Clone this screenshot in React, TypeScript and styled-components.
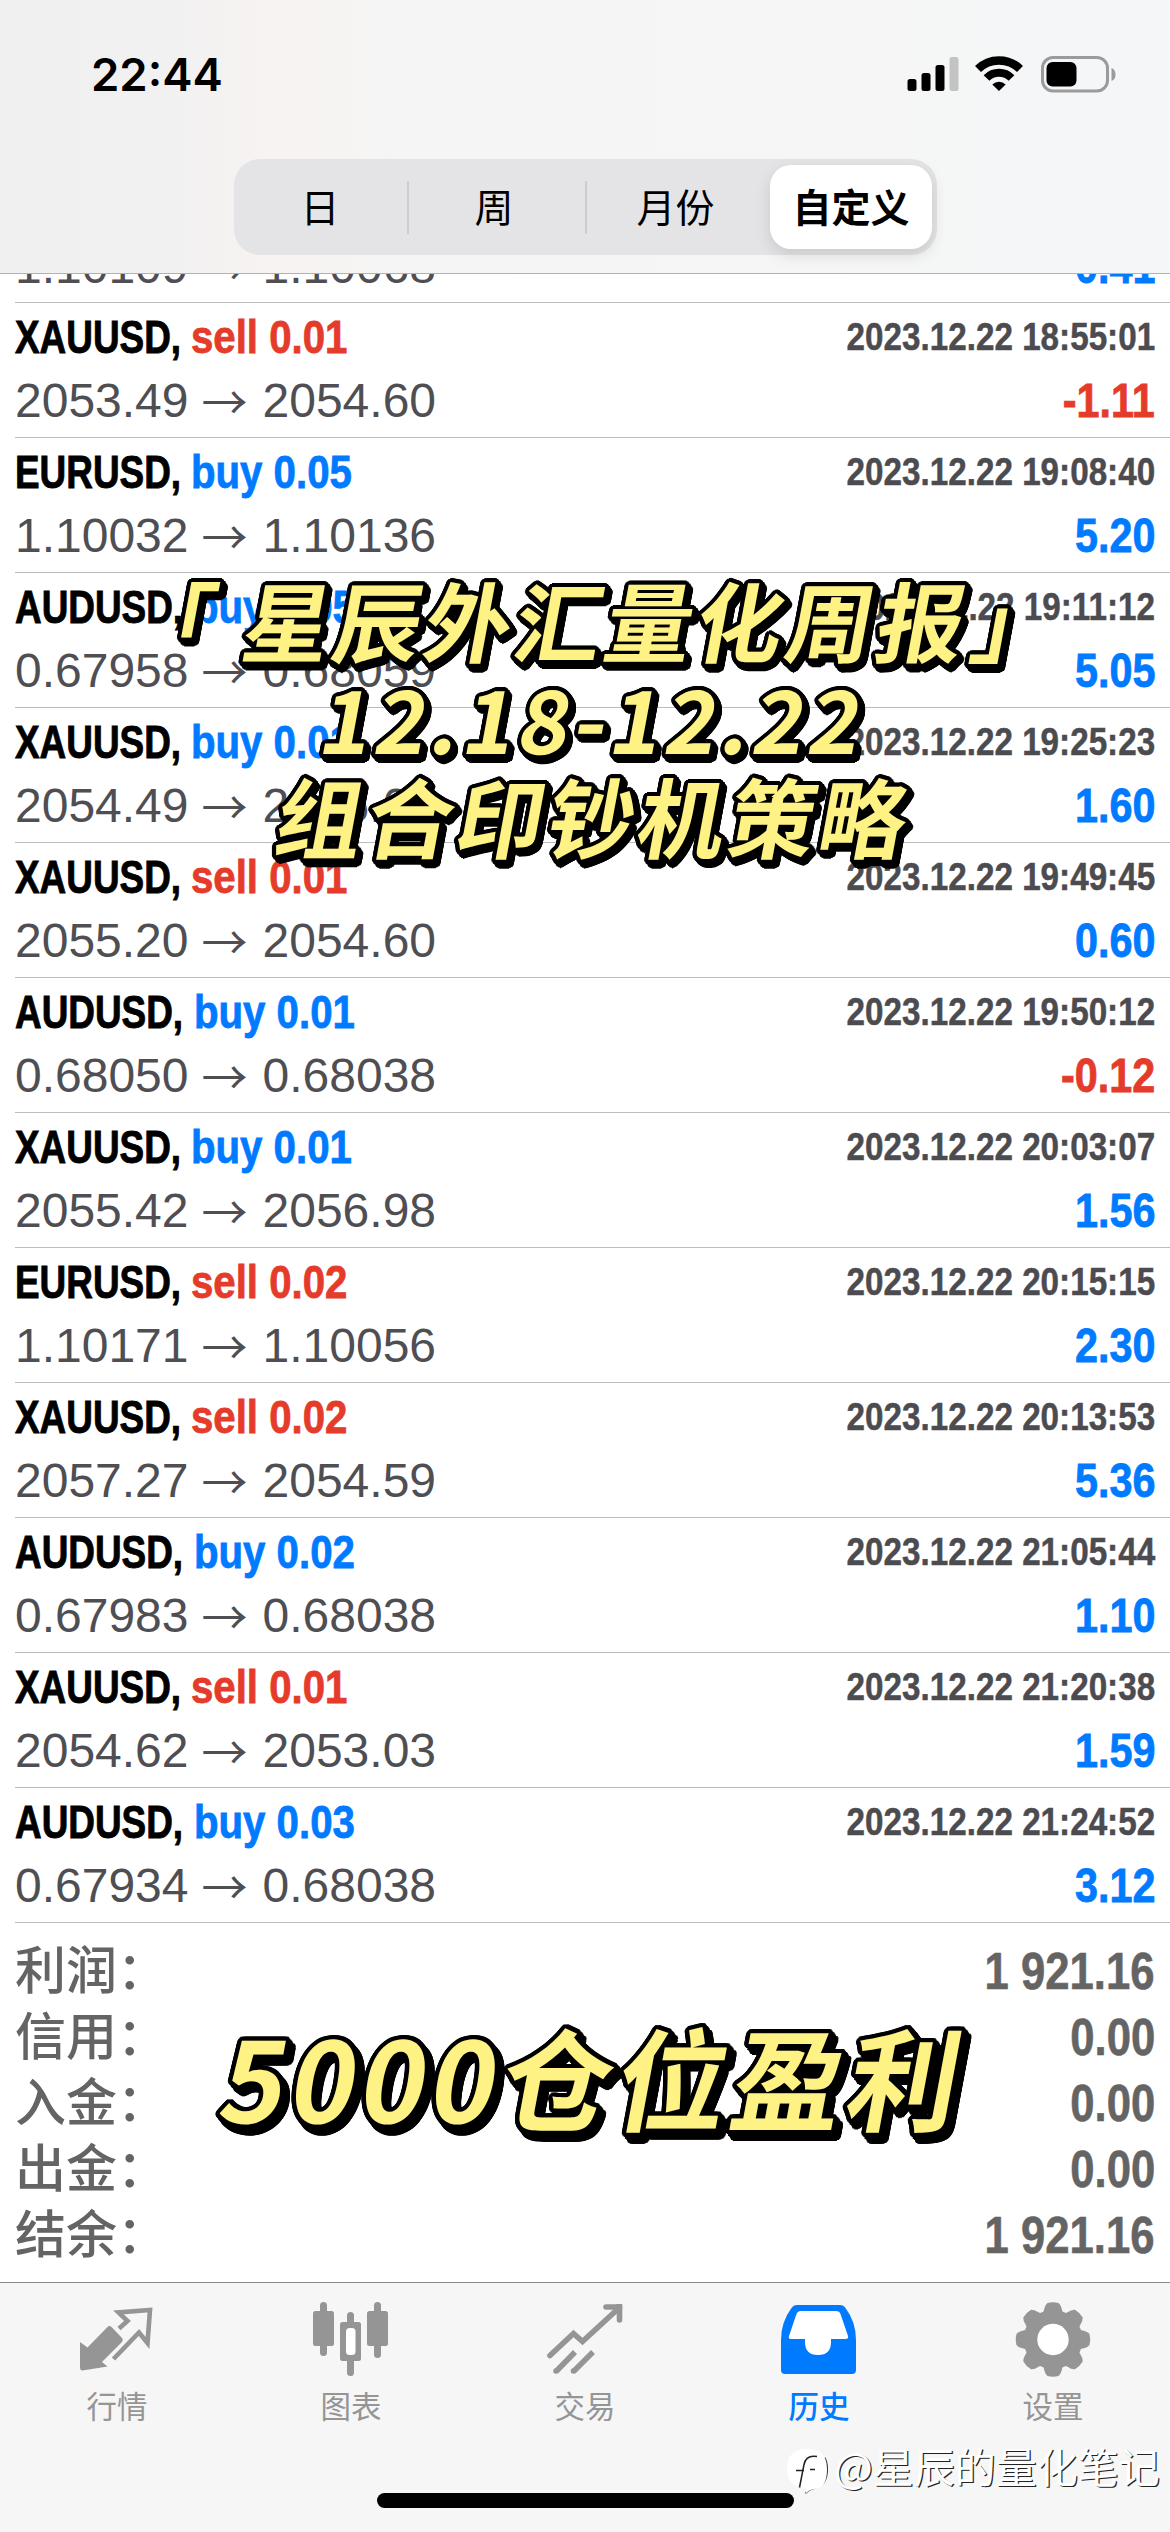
import React from "react";
import styled, { createGlobalStyle } from "styled-components";

const latin = `"Liberation Sans", Arial, "Noto Sans CJK SC", sans-serif`;
const cjk = `"Noto Sans CJK SC", "Liberation Sans", sans-serif`;
const blue = "#007aff";
const red = "#e53b2a";

const Global = createGlobalStyle`
  *{box-sizing:border-box}
  html,body{margin:0;padding:0;background:#fff}
`;

const Screen = styled.main`
  position: relative;
  width: 1170px;
  height: 2532px;
  overflow: hidden;
  display: flex;
  flex-direction: column;
  background: #fff;
  font-family: ${latin};
  font-kerning: none;
`;

const Header = styled.header`
  height: 274px;
  flex: none;
  border-bottom: 1px solid #b2b2b4;
  background: linear-gradient(90deg, #f0f0f0 0, #f2f1f1 170px, #f7f3f2 285px, #f5f5f5 420px, #f6f6f6 900px, #f4f6f9 1170px);
`;
const StatusBar = styled.div`
  height: 159px;
  padding: 52px 54px 0 91px;
  display: flex;
  justify-content: space-between;
`;
const Clock = styled.time`
  font: 600 45.5px/45px Inter, sans-serif;
  letter-spacing: 0;
  color: #000;
`;
const Segments = styled.nav`
  width: 703px;
  height: 96px;
  margin-left: 234px;
  padding: 6px 5px;
  border-radius: 26px;
  background: #e4e4e6;
  display: flex;
  align-items: center;
`;
const Segment = styled.button<{ $selected?: boolean; $w: number }>`
  width: ${(p) => p.$w}px;
  flex: none;
  height: 84px;
  border: 0;
  padding: ${(p) => (p.$selected ? "0 0 5px" : "0 6px 5px 0")};
  border-radius: 21px;
  background: ${(p) => (p.$selected ? "#fff" : "transparent")};
  box-shadow: ${(p) => (p.$selected ? "0 6px 16px rgba(0,0,0,.12)" : "none")};
  font: ${(p) => (p.$selected ? 700 : 400)} 39px/76px ${cjk};
  color: #000;
`;
const Divider = styled.span`
  width: 2px;
  height: 53px;
  background: #cdcdd0;
`;

const List = styled.section`
  height: 1649px;
  flex: none;
  overflow: hidden;
  display: flex;
  flex-direction: column;
  justify-content: flex-end;
`;
const Row = styled.article`
  height: 135px;
  flex: none;
  margin-left: 15px;
  padding: 7px 15px 0 0;
  border-bottom: 1px solid #bbbcbe;
`;
const ClippedRow = styled.article`
  height: 73px;
  flex: none;
  margin-left: 15px;
  padding-right: 15px;
  border-bottom: 1px solid #bbbcbe;
`;
const Line = styled.div<{ $h: number }>`
  height: ${(p) => p.$h}px;
  display: flex;
  justify-content: space-between;
  align-items: center;
`;
const Group = styled.div`
  display: flex;
  align-items: center;
`;
const SymbolName = styled.span<{ $w: number }>`
  width: ${(p) => p.$w}px;
  font: bold 47px/54px ${latin};
  white-space: nowrap;
  color: #000;
  -webkit-text-stroke: 0.9px #000;
  transform: scaleX(0.785);
  transform-origin: left;
`;
const Deal = styled.span<{ $color: string }>`
  font: bold 47px/54px ${latin};
  white-space: pre;
  color: ${(p) => p.$color};
  -webkit-text-stroke: 0.8px ${(p) => p.$color};
  transform: scaleX(0.855);
  transform-origin: left;
`;
const Stamp = styled.time`
  font: bold 39px/54px ${latin};
  white-space: nowrap;
  color: #4b4b50;
  -webkit-text-stroke: 0.5px #4b4b50;
  transform: scaleX(0.852);
  transform-origin: right;
`;
const Price = styled.span`
  font: 48px/54px ${latin};
  color: #4e4e53;
`;
const Arrow = styled.span`
  width: 74px;
  padding: 0 2px 5px 0;
  text-align: center;
  font: 400 46px/54px ${cjk};
  color: #4e4e53;
`;
const Profit = styled.span<{ $color: string }>`
  font: bold 47.5px/54px ${latin};
  color: ${(p) => p.$color};
  -webkit-text-stroke: 0.8px ${(p) => p.$color};
  transform: scaleX(0.87);
  transform-origin: right;
`;

const Summary = styled.section`
  height: 359px;
  flex: none;
  padding: 14px 15px 0;
  display: flex;
  flex-direction: column;
`;
const SummaryRow = styled.div`
  height: 66px;
  display: flex;
  justify-content: space-between;
  align-items: center;
  color: #646464;
`;
const SummaryLabel = styled.span`
  padding-bottom: 6px;
  font: 500 51px/60px ${cjk};
`;
const SummaryValue = styled.span`
  padding-top: 4px;
  font: bold 51px/62px ${latin};
  -webkit-text-stroke: 0.6px #646464;
  transform: scaleX(0.856);
  transform-origin: right;
`;

const TabBar = styled.nav`
  height: 250px;
  flex: none;
  border-top: 1px solid #8a8a8d;
  background: #f6f6f6;
  display: flex;
  align-items: flex-start;
`;
const Tab = styled.a<{ $active?: boolean }>`
  flex: 1;
  display: flex;
  flex-direction: column;
  align-items: center;
  padding-top: 15px;
  color: ${(p) => (p.$active ? blue : "#959595")};
  font: ${(p) => (p.$active ? 500 : 400)} 30.5px/36px ${cjk};
  svg {
    display: block;
    margin-bottom: 5px;
  }
`;
const HomeIndicator = styled.div`
  position: absolute;
  left: 377px;
  top: 2493px;
  width: 417px;
  height: 15px;
  border-radius: 8px;
  background: #000;
`;

/* Round outline plus a diagonal extrusion, built from hard-edged shadows. */
function stickerShadow(radius: number, depth: number) {
  const parts: string[] = [];
  for (const d of [0, depth / 2, depth]) {
    for (let i = 0; i < 24; i++) {
      const a = (i * Math.PI) / 12;
      parts.push(`${(Math.cos(a) * radius + d).toFixed(1)}px ${(Math.sin(a) * radius + d).toFixed(1)}px 0 #000`);
    }
  }
  return parts.join(",");
}
const Sticker = styled.div<{ $top: number; $size: number; $line: number; $gap: number; $shadow: string }>`
  position: absolute;
  left: 0;
  top: ${(p) => p.$top}px;
  width: 1170px;
  display: flex;
  flex-direction: column;
  align-items: center;
  font: 700 ${(p) => p.$size}px/${(p) => p.$line}px ${cjk};
  letter-spacing: ${(p) => p.$gap}px;
  white-space: nowrap;
  color: #fff285;
  text-shadow: ${(p) => p.$shadow};
`;
const StickerLine = styled.span<{ $dx?: number; $gap?: number }>`
  letter-spacing: ${(p) => (p.$gap ? `${p.$gap}px` : "inherit")};
  transform: translateX(${(p) => p.$dx ?? 0}px) skewX(-10.5deg);
`;
const OpenQuote = styled.span`
  margin-left: -26px;
  margin-right: 26px;
`;
const CloseQuote = styled.span`
  margin-left: 5px;
  margin-right: -5px;
`;

const Watermark = styled.div`
  position: absolute;
  left: 786px;
  top: 2434px;
  display: flex;
  align-items: center;
  gap: 6px;
  font: 400 41px/50px ${cjk};
  color: #fff;
  text-shadow: 1.3px 1.3px 0 #222;
  white-space: nowrap;
  svg {
    margin-top: 14px;
  }
`;

const SignalIcons = () => (
  <svg width="212" height="44" viewBox="904 52 212 44">
    <rect x="907.500" y="79" width="9" height="12" rx="2.500" />
    <rect x="921.500" y="73" width="9" height="18" rx="2.500" />
    <rect x="935.500" y="65" width="9" height="26" rx="2.500" />
    <rect x="949.500" y="57" width="9" height="34" rx="2.500" fill="#c3c3c4" />
    <g fill="none" stroke="#000">
      <path d="M978 69a30 30 0 0 1 42 0" strokeWidth="8.500" />
      <path d="M986.500 78a17.500 17.500 0 0 1 25 0" strokeWidth="8" />
    </g>
    <path d="M992.300 84.500a9.600 9.600 0 0 1 13.400 0L999 91z" />
    <rect x="1042.500" y="57.500" width="65" height="33.500" rx="10.500" fill="none" stroke="#9b9b9c" strokeWidth="3" />
    <rect x="1046.500" y="62" width="30" height="24.500" rx="6" />
    <path d="M1111.500 68q4 1.500 4 6.500t-4 6.500z" fill="#9b9b9c" />
  </svg>
);

const Icon = ({ children, left }: { children: React.ReactNode; left: number }) => (
  <svg width="84" height="84" viewBox={`${left} 2298 84 84`} fill="currentColor">
    {children}
  </svg>
);
const QuotesIcon = () => (
  <Icon left={75}>
    <path d="M80 2342l7.500 5.500 20-20.500q2-1.800 4 0l10 10.500q2.500 2.500 0 5L102 2362l5.500 4.500-25 4q-2.500 0-2.500-3z" />
    <path d="M119 2328.500l8.500-7.500-9-8.500 31.500-2.500-2.500 33-8.500-10.500-25.500 26.500" fill="none" stroke="currentColor" strokeWidth="4.600" />
  </Icon>
);
const ChartIcon = () => (
  <Icon left={309}>
    <rect x="313" y="2311" width="21" height="35" rx="2.500" />
    <rect x="320" y="2302" width="7" height="54" rx="3.500" />
    <rect x="367" y="2311" width="21" height="35" rx="2.500" />
    <rect x="374" y="2302" width="7" height="56" rx="3.500" />
    <rect x="347" y="2312" width="7" height="64" rx="3.500" />
    <rect x="340" y="2322" width="21" height="39" rx="2.500" />
    <rect x="346" y="2328" width="9.500" height="27" rx="3.500" fill="#fff" />
  </Icon>
);
const TradeIcon = () => (
  <Icon left={543}>
    <g fill="none" stroke="currentColor" strokeWidth="5.600">
      <path d="M550 2355.500l23.500-22 9 8 37-34" strokeLinecap="round" />
      <path d="M606 2307h13.500v13" strokeLinecap="round" />
      <path d="M556 2371.500l19-19.500M573.500 2371.500l19.500-19.500" />
    </g>
    <path d="M616 2304h6v7z" />
    <circle cx="556" cy="2371" r="2.800" />
    <circle cx="573.500" cy="2371" r="2.800" />
  </Icon>
);
const HistoryIcon = () => (
  <Icon left={777}>
    <path d="M797 2305h43q3.500 0 5.500 3 10.500 14 10.500 32v30q0 4-4 4h-67q-4 0-4-4v-30q0-18 10.500-32 2-3 5.500-3z" />
    <path d="M801 2311h35q3.500 0 4.500 3l7.500 22q.8 3-2.500 3H831v3q0 13-13 13t-13-13v-3h-14q-3 0-2-3l7.500-22q1-3 4.500-3z" fill="#fff" />
  </Icon>
);
const SettingsIcon = () => (
  <Icon left={1011}>
    {Array.from({ length: 8 }, (_, i) => (
      <path
        key={i}
        d="M1038 2318q5-3 6-8 1-5 3.500-7 5.500-1.500 11 0 2.500 2 3.500 7 1 5 6 8z"
        transform={`rotate(${i * 45} 1053 2339.500)`}
      />
    ))}
    <circle cx="1053" cy="2339.500" r="29.500" />
    <circle cx="1053" cy="2339.500" r="15.700" fill="#fff" />
  </Icon>
);

const WatermarkLogo = () => (
  <svg width="42" height="48" viewBox="786 2446 42 48">
    <path d="M825 2455q3 4 3 12.500 0 16.500-13.500 19.500-5.500 1-8.500 5l-1-1z" fill="#333" />
    <path d="M807 2447q20 0 20 20t-13 20q-6 1-8.500 5l1-6q-19.500-1-19.500-19.500 0-19.500 20-19.500z" fill="#fff" />
    <path d="M817 2454.500q-11-2-13 8l-4.500 23M796 2468.500h8M810 2467.500h5" fill="none" stroke="#222" strokeWidth="1.500" />
  </svg>
);

type Trade = [string, "buy" | "sell", string, string, string, string, string];
const trades: Trade[] = [
  ["XAUUSD", "sell", "0.01", "2053.49", "2054.60", "2023.12.22 18:55:01", "-1.11"],
  ["EURUSD", "buy", "0.05", "1.10032", "1.10136", "2023.12.22 19:08:40", "5.20"],
  ["AUDUSD", "buy", "0.05", "0.67958", "0.68059", "2023.12.22 19:11:12", "5.05"],
  ["XAUUSD", "buy", "0.01", "2054.49", "2056.09", "2023.12.22 19:25:23", "1.60"],
  ["XAUUSD", "sell", "0.01", "2055.20", "2054.60", "2023.12.22 19:49:45", "0.60"],
  ["AUDUSD", "buy", "0.01", "0.68050", "0.68038", "2023.12.22 19:50:12", "-0.12"],
  ["XAUUSD", "buy", "0.01", "2055.42", "2056.98", "2023.12.22 20:03:07", "1.56"],
  ["EURUSD", "sell", "0.02", "1.10171", "1.10056", "2023.12.22 20:15:15", "2.30"],
  ["XAUUSD", "sell", "0.02", "2057.27", "2054.59", "2023.12.22 20:13:53", "5.36"],
  ["AUDUSD", "buy", "0.02", "0.67983", "0.68038", "2023.12.22 21:05:44", "1.10"],
  ["XAUUSD", "sell", "0.01", "2054.62", "2053.03", "2023.12.22 21:20:38", "1.59"],
  ["AUDUSD", "buy", "0.03", "0.67934", "0.68038", "2023.12.22 21:24:52", "3.12"],
];
const totals = [
  ["利润：", "1 921.16"],
  ["信用：", "0.00"],
  ["入金：", "0.00"],
  ["出金：", "0.00"],
  ["结余：", "1 921.16"],
];

const PriceLine = ({ open, close, profit }: { open: string; close: string; profit: string }) => (
  <Line $h={74}>
    <Group>
      <Price>{open}</Price>
      <Arrow>→</Arrow>
      <Price>{close}</Price>
    </Group>
    <Profit $color={profit.startsWith("-") ? red : blue}>{profit}</Profit>
  </Line>
);

export default function App() {
  return (
    <>
      <Global />
      <Screen>
        <Header>
          <StatusBar>
            <Clock>22:44</Clock>
            <SignalIcons />
          </StatusBar>
          <Segments>
            <Segment $w={168}>日</Segment>
            <Divider />
            <Segment $w={176}>周</Segment>
            <Divider />
            <Segment $w={183}>月份</Segment>
            <Segment $w={162} $selected>自定义</Segment>
          </Segments>
        </Header>
        <List>
          <ClippedRow>
            <PriceLine open="1.10109" close="1.10068" profit="0.41" />
          </ClippedRow>
          {trades.map(([sym, side, vol, open, close, at, profit]) => (
            <Row key={at}>
              <Line $h={54}>
                <Group>
                  <SymbolName $w={sym === "AUDUSD" ? 178.5 : 176}>{sym},</SymbolName>
                  <Deal $color={side === "buy" ? blue : red}>{side} {vol}</Deal>
                </Group>
                <Stamp>{at}</Stamp>
              </Line>
              <PriceLine open={open} close={close} profit={profit} />
            </Row>
          ))}
        </List>
        <Summary>
          {totals.map(([label, value]) => (
            <SummaryRow key={label}>
              <SummaryLabel>{label}</SummaryLabel>
              <SummaryValue>{value}</SummaryValue>
            </SummaryRow>
          ))}
        </Summary>
        <TabBar>
          <Tab><QuotesIcon />行情</Tab>
          <Tab><ChartIcon />图表</Tab>
          <Tab><TradeIcon />交易</Tab>
          <Tab $active><HistoryIcon />历史</Tab>
          <Tab><SettingsIcon />设置</Tab>
        </TabBar>
        <HomeIndicator />
        <Sticker $top={569} $size={87} $line={98} $gap={3.5} $shadow={stickerShadow(4, 4.5)}>
          <StickerLine $dx={22}><OpenQuote>「</OpenQuote>星辰外汇量化周报<CloseQuote>」</CloseQuote></StickerLine>
          <StickerLine $dx={10} $gap={4.1}>12.18-12.22</StickerLine>
          <StickerLine $dx={10}>组合印钞机策略</StickerLine>
        </Sticker>
        <Sticker $top={2010} $size={111} $line={130} $gap={4.5} $shadow={stickerShadow(4.5, 6.5)}>
          <StickerLine $dx={10}>5000仓位盈利</StickerLine>
        </Sticker>
        <Watermark>
          <WatermarkLogo />
          @星辰的量化笔记
        </Watermark>
      </Screen>
    </>
  );
}
